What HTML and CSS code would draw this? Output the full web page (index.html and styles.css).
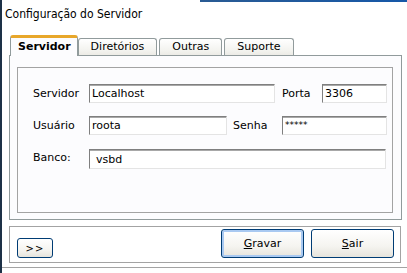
FILE: index.html
```html
<!DOCTYPE html>
<html lang="pt">
<head>
    <meta charset="UTF-8">
    <title>Configuração do Servidor</title>
    <link rel="stylesheet" href="styles.css">
</head>
<body>
<div class="window">
    <div class="title">Configuração do Servidor</div>

    <div class="tabstrip">
        <div class="tab active">Servidor</div>
        <div class="tab">Diretórios</div>
        <div class="tab">Outras</div>
        <div class="tab">Suporte</div>
    </div>

    <div class="sheet">
        <div class="group">
            <div class="row">
                <label class="lbl">Servidor</label>
                <div class="field w-host">Localhost</div>
                <label class="lbl2 porta">Porta</label>
                <div class="field w-porta">3306</div>
            </div>
            <div class="row">
                <label class="lbl">Usuário</label>
                <div class="field w-user">roota</div>
                <label class="lbl2 senha">Senha</label>
                <div class="field w-senha pass">*****</div>
            </div>
            <div class="row">
                <label class="lbl">Banco:</label>
                <div class="field w-banco tall">vsbd</div>
            </div>
        </div>
    </div>

    <div class="footer">
        <button class="btn small">&gt;&gt;</button>
        <div class="spacer"></div>
        <button class="btn big focused"><u>G</u>ravar</button>
        <button class="btn big"><u>S</u>air</button>
    </div>

    <div class="bottomline"></div>
</div>
</body>
</html>
```

FILE: styles.css
```css
body {
    margin: 0;
    padding: 0;
    background-color: #fff;
    font-family: 'DejaVu Sans', Verdana, sans-serif;
    font-size: 11px;
    color: #000;
}
.window {
    position: relative;
    width: 407px;
    height: 273px;
    border-left: 2px solid #1d3147;
    box-sizing: border-box;
    overflow: hidden;
}
.window::before {
    content: "";
    position: absolute;
    top: 0;
    left: 198px;
    right: 0;
    height: 2px;
    background: linear-gradient(to right, #2a5b93, #1658a8);
}
.title {
    height: 35px;
    padding: 7px 0 0 3px;
    box-sizing: border-box;
    font-family: 'DejaVu Sans Condensed', 'DejaVu Sans', sans-serif;
    font-size: 12px;
    line-height: 15px;
}
.tabstrip {
    display: flex;
    align-items: flex-end;
    height: 20px;
    padding-left: 8px;
    position: relative;
    z-index: 1;
}
.tab {
    height: 17px;
    line-height: 16px;
    padding: 0 12px;
    margin-right: 2px;
    border: 1px solid #919b9c;
    border-bottom: none;
    border-radius: 3px 3px 0 0;
    background: linear-gradient(#ffffff, #f3f3ef 70%, #ecebe6);
    box-sizing: border-box;
}
.tab.active {
    height: 21px;
    margin-bottom: -1px;
    padding: 0 6px 0 7px;
    border-top: 3px solid #e8a72a;
    background: #fcfcfe;
    font-weight: bold;
    line-height: 17px;
    margin-right: 0;
}
.sheet {
    margin-left: 7px;
    width: 393px;
    height: 165px;
    border: 1px solid #919b9c;
    background: #fcfcfe;
    box-sizing: border-box;
    padding: 11px 8px 6px 7px;
}
.group {
    height: 100%;
    border: 1px solid #a3a3a3;
    box-sizing: border-box;
    padding-top: 16px;
    display: flex;
    flex-direction: column;
    gap: 13px;
}
.row {
    display: flex;
    align-items: center;
    height: 19px;
}
.lbl {
    width: 71px;
    padding-left: 15px;
    box-sizing: border-box;
}
.lbl2 {
    box-sizing: border-box;
}
.porta {
    width: 47px;
    padding-left: 7px;
}
.senha {
    width: 55px;
    padding-left: 6px;
}
.field {
    height: 19px;
    line-height: 17px;
    padding-left: 2px;
    border: 1px solid;
    border-color: #7f7f7f #e4e4e4 #e4e4e4 #7f7f7f;
    box-shadow: inset 0 1px 0 #a8a8a8;
    background: #fff;
    box-sizing: border-box;
}
.field.tall {
    height: 20px;
    line-height: 19px;
    padding-left: 6px;
}
.w-host { width: 186px; }
.w-porta { width: 65px; }
.w-user { width: 138px; }
.w-senha { width: 105px; }
.w-banco { width: 297px; margin-top: 2px; }
.pass {
    font-size: 9px;
}
.footer {
    display: flex;
    align-items: center;
    margin: 6px 0 0 7px;
    width: 392px;
    height: 37px;
    border: 1px solid #a3a3a3;
    box-sizing: border-box;
    padding: 0 6px 0 7px;
}
.spacer {
    flex: 1;
}
.btn {
    font-family: 'DejaVu Sans', Verdana, sans-serif;
    font-size: 11px;
    color: #000;
    border: 1px solid #003c74;
    border-radius: 3px;
    background: linear-gradient(#ffffff, #f5f4f0 60%, #e6e4dc);
    box-sizing: border-box;
    padding: 0;
}
.btn.small {
    width: 36px;
    height: 20px;
    margin-top: 7px;
    font-size: 10px;
    letter-spacing: 1px;
}
.btn.big {
    width: 83px;
    height: 29px;
    margin-left: 7px;
    margin-top: -2px;
}
.btn.focused {
    box-shadow: inset 0 0 0 2px #a9c9f1;
}
.bottomline {
    margin-top: 4px;
    height: 1px;
    background: #a3a3a3;
}
```
